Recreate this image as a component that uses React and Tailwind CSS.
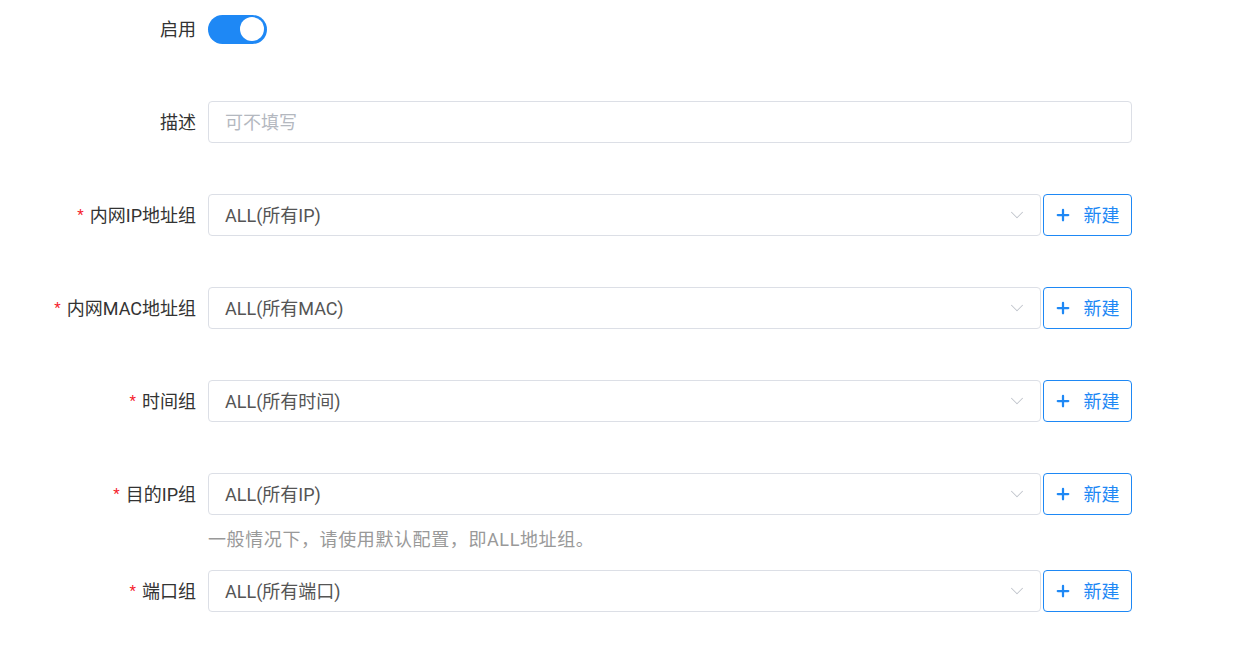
import { ChevronDown, Plus } from "lucide-react";

const Label = ({ text, required }) => (
  <div className="w-[196px] shrink-0 flex items-center justify-end text-[18px] text-[#333]">
    {required && <span className="text-[#f5222d] mr-[6px] text-[15px]">*</span>}
    <span>{text}</span>
  </div>
);

const SelectRow = ({ label, value }) => (
  <div className="flex items-center h-[42px]">
    <Label text={label} required />
    <div className="ml-[12px] flex w-[924px] h-[42px]">
      <div className="flex-1 flex items-center justify-between border border-[#dcdfe6] rounded-[4px] pl-[16px] pr-[12px] text-[18px] text-[#555]">
        <span>{value}</span>
        <ChevronDown className="w-[22px] h-[22px] text-[#c0c4cc]" strokeWidth={1.1} />
      </div>
      <button className="ml-[2px] w-[89px] flex items-center justify-center gap-[12px] pr-[2px] border border-[#1e88f5] rounded-[4px] text-[#1e88f5] text-[18px]">
        <Plus className="w-[18px] h-[18px]" strokeWidth={3} />
        <span>新建</span>
      </button>
    </div>
  </div>
);

export default function App() {
  return (
    <div
      className="w-[1258px] h-[647px] bg-white pt-[8px]"
      style={{ fontFamily: 'Roboto, "Noto Sans CJK SC", sans-serif' }}
    >
      <div className="flex items-center h-[42px] mb-[51px]">
        <Label text="启用" />
        <div className="ml-[12px] w-[59px] h-[29px] rounded-full bg-[#1e88f5] flex items-center justify-end pr-[3px]">
          <div className="w-[24px] h-[24px] rounded-full bg-white" />
        </div>
      </div>

      <div className="flex items-center h-[42px] mb-[51px]">
        <Label text="描述" />
        <input
          className="ml-[12px] w-[924px] h-[42px] border border-[#dcdfe6] rounded-[4px] px-[16px] text-[18px] outline-none placeholder:text-[#b4b8bf]"
          placeholder="可不填写"
        />
      </div>

      <div className="mb-[51px]">
        <SelectRow label="内网IP地址组" value="ALL(所有IP)" />
      </div>
      <div className="mb-[51px]">
        <SelectRow label="内网MAC地址组" value="ALL(所有MAC)" />
      </div>
      <div className="mb-[51px]">
        <SelectRow label="时间组" value="ALL(所有时间)" />
      </div>
      <div className="mb-[15px]">
        <SelectRow label="目的IP组" value="ALL(所有IP)" />
        <div className="ml-[208px] mt-[10px] h-[30px] leading-[30px] text-[18px] tracking-[0.6px] text-[#999]">
          一般情况下，请使用默认配置，即ALL地址组。
        </div>
      </div>
      <SelectRow label="端口组" value="ALL(所有端口)" />
    </div>
  );
}
